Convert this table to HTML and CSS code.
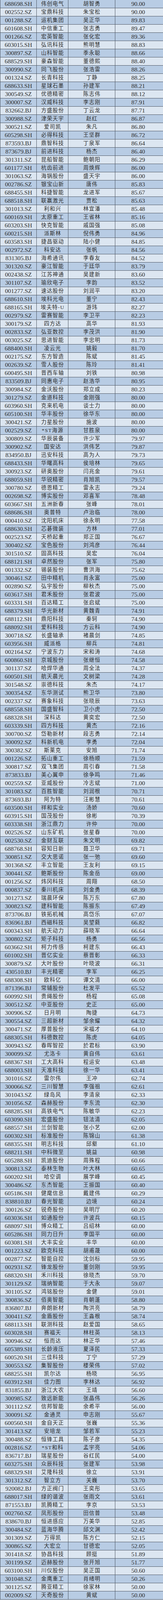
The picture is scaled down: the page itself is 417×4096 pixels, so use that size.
FILE: index.html
```html
<!DOCTYPE html>
<html lang="zh-CN">
<head>
<meta charset="utf-8">
<title>表</title>
<link rel="stylesheet" href="styles.css">
</head>
<body>
<div class="tbl">
<div class="r"><span>688698.SH</span><span class="cn">伟创电气</span><span class="cn">胡智勇</span><span>90.00</span></div>
<div class="r"><span>002552.SZ</span><span class="cn">宝鼎科技</span><span class="cn">朱宝松</span><span>90.00</span></div>
<div class="r"><span>001288.SZ</span><span class="cn">运机集团</span><span class="cn">吴正华</span><span>89.83</span></div>
<div class="r"><span>601608.SH</span><span class="cn">中信重工</span><span class="cn">张志勇</span><span>89.47</span></div>
<div class="r"><span>001266.SZ</span><span class="cn">宏英智能</span><span class="cn">张化宏</span><span>89.36</span></div>
<div class="r"><span>603015.SH</span><span class="cn">弘讯科技</span><span class="cn">熊明慧</span><span>88.83</span></div>
<div class="r"><span>300897.SZ</span><span class="cn">山科智能</span><span class="cn">季永聪</span><span>88.66</span></div>
<div class="r"><span>688529.SH</span><span class="cn">豪森智能</span><span class="cn">董德熙</span><span>88.40</span></div>
<div class="r"><span>300990.SZ</span><span class="cn">同飞股份</span><span class="cn">张浩雷</span><span>88.26</span></div>
<div class="r"><span>001324.SZ</span><span class="cn">长青科技</span><span class="cn">丁静</span><span>88.25</span></div>
<div class="r"><span>688633.SH</span><span class="cn">星球石墨</span><span class="cn">孙建军</span><span>88.21</span></div>
<div class="r"><span>300549.SZ</span><span class="cn">优德精密</span><span class="cn">陈志伟</span><span>88.12</span></div>
<div class="r"><span>300007.SZ</span><span class="cn">汉威科技</span><span class="cn">李志刚</span><span>87.91</span></div>
<div class="r"><span>832662.BJ</span><span class="cn">方盛股份</span><span class="cn">丁云龙</span><span>87.71</span></div>
<div class="r"><span>300988.SZ</span><span class="cn">津荣天宇</span><span class="cn">赵红</span><span>86.87</span></div>
<div class="r"><span>300521.SZ</span><span class="cn">爱司凯</span><span class="cn">朱凡</span><span>86.80</span></div>
<div class="r"><span>605298.SH</span><span class="cn">必得科技</span><span class="cn">王坚群</span><span>86.72</span></div>
<div class="r"><span>873593.BJ</span><span class="cn">鼎智科技</span><span class="cn">丁泉军</span><span>86.64</span></div>
<div class="r"><span>873679.BJ</span><span class="cn">前进科技</span><span class="cn">杨杰</span><span>86.40</span></div>
<div class="r"><span>301311.SZ</span><span class="cn">昆船智能</span><span class="cn">鲍朝阳</span><span>86.29</span></div>
<div class="r"><span>601177.SH</span><span class="cn">杭齿前进</span><span class="cn">周焕辉</span><span>86.00</span></div>
<div class="r"><span>301063.SZ</span><span class="cn">海锅股份</span><span class="cn">盛天宇</span><span>86.00</span></div>
<div class="r"><span>002786.SZ</span><span class="cn">银宝山新</span><span class="cn">唐伟</span><span>85.83</span></div>
<div class="r"><span>688455.SH</span><span class="cn">科捷智能</span><span class="cn">龙进军</span><span>85.67</span></div>
<div class="r"><span>688518.SH</span><span class="cn">联赢激光</span><span class="cn">贾松</span><span>85.63</span></div>
<div class="r"><span>301013.SZ</span><span class="cn">利和兴</span><span class="cn">林宜潘</span><span>85.48</span></div>
<div class="r"><span>600169.SH</span><span class="cn">太原重工</span><span class="cn">王省林</span><span>85.16</span></div>
<div class="r"><span>603203.SH</span><span class="cn">快克智能</span><span class="cn">戚国强</span><span>85.08</span></div>
<div class="r"><span>600215.SH</span><span class="cn">派斯林</span><span class="cn">倪伟勇</span><span>84.96</span></div>
<div class="r"><span>603583.SH</span><span class="cn">捷昌驱动</span><span class="cn">陆小健</span><span>84.85</span></div>
<div class="r"><span>002972.SZ</span><span class="cn">科安达</span><span class="cn">张帆</span><span>84.56</span></div>
<div class="r"><span>831305.BJ</span><span class="cn">海希通讯</span><span class="cn">李春友</span><span>84.52</span></div>
<div class="r"><span>301320.SZ</span><span class="cn">豪江智能</span><span class="cn">于廷华</span><span>83.79</span></div>
<div class="r"><span>002438.SZ</span><span class="cn">江苏神通</span><span class="cn">吴建新</span><span>83.60</span></div>
<div class="r"><span>301107.SZ</span><span class="cn">瑜欣电子</span><span class="cn">李韵</span><span>83.52</span></div>
<div class="r"><span>001277.SZ</span><span class="cn">速达股份</span><span class="cn">刘润平</span><span>83.20</span></div>
<div class="r"><span>688610.SH</span><span class="cn">埃科光电</span><span class="cn">董宁</span><span>82.43</span></div>
<div class="r"><span>688165.SH</span><span class="cn">埃夫特-U</span><span class="cn">游玮</span><span>82.27</span></div>
<div class="r"><span>002979.SZ</span><span class="cn">雷赛智能</span><span class="cn">李卫平</span><span>82.23</span></div>
<div class="r"><span>300179.SZ</span><span class="cn">四方达</span><span class="cn">高华</span><span>81.93</span></div>
<div class="r"><span>002833.SZ</span><span class="cn">弘亚数控</span><span class="cn">李茂洪</span><span>81.90</span></div>
<div class="r"><span>003025.SZ</span><span class="cn">思进智能</span><span class="cn">李忠明</span><span>81.73</span></div>
<div class="r"><span>688400.SH</span><span class="cn">凌云光</span><span class="cn">姚毅</span><span>81.70</span></div>
<div class="r"><span>002175.SZ</span><span class="cn">东方智造</span><span class="cn">陈斌</span><span>81.45</span></div>
<div class="r"><span>002639.SZ</span><span class="cn">雪人股份</span><span class="cn">陈玲</span><span>81.41</span></div>
<div class="r"><span>600495.SH</span><span class="cn">晋西车轴</span><span class="cn">刘铁</span><span>80.98</span></div>
<div class="r"><span>833509.BJ</span><span class="cn">同惠电子</span><span class="cn">赵浩华</span><span>80.95</span></div>
<div class="r"><span>300984.SZ</span><span class="cn">金沃股份</span><span class="cn">郑立成</span><span>80.23</span></div>
<div class="r"><span>301279.SZ</span><span class="cn">金道科技</span><span class="cn">金刚强</span><span>80.00</span></div>
<div class="r"><span>603960.SH</span><span class="cn">克来机电</span><span class="cn">谈士力</span><span>80.00</span></div>
<div class="r"><span>605100.SH</span><span class="cn">华丰股份</span><span class="cn">徐华东</span><span>80.00</span></div>
<div class="r"><span>300421.SZ</span><span class="cn">力星股份</span><span class="cn">施波</span><span>80.00</span></div>
<div class="r"><span>002529.SZ</span><span class="cn">*ST海源</span><span class="cn">甘胜泉</span><span>80.00</span></div>
<div class="r"><span>300809.SZ</span><span class="cn">华辰装备</span><span class="cn">许少军</span><span>79.97</span></div>
<div class="r"><span>300902.SZ</span><span class="cn">国安达</span><span class="cn">洪伟艺</span><span>79.87</span></div>
<div class="r"><span>834950.BJ</span><span class="cn">迅安科技</span><span class="cn">高为人</span><span>79.73</span></div>
<div class="r"><span>688433.SH</span><span class="cn">华曙高科</span><span class="cn">侯培林</span><span>79.65</span></div>
<div class="r"><span>300923.SZ</span><span class="cn">研奥股份</span><span class="cn">闫兆金</span><span>79.61</span></div>
<div class="r"><span>688059.SH</span><span class="cn">华锐精密</span><span class="cn">肖旭凯</span><span>79.57</span></div>
<div class="r"><span>300780.SZ</span><span class="cn">德恩精工</span><span class="cn">雷永志</span><span>79.24</span></div>
<div class="r"><span>002698.SZ</span><span class="cn">博实股份</span><span class="cn">邓喜军</span><span>78.48</span></div>
<div class="r"><span>603667.SH</span><span class="cn">五洲新春</span><span class="cn">张峰</span><span>78.01</span></div>
<div class="r"><span>688686.SH</span><span class="cn">奥普特</span><span class="cn">卢治临</span><span>78.00</span></div>
<div class="r"><span>000410.SZ</span><span class="cn">沈阳机床</span><span class="cn">徐永明</span><span>77.58</span></div>
<div class="r"><span>688630.SH</span><span class="cn">芯碁微装</span><span class="cn">方林</span><span>77.01</span></div>
<div class="r"><span>002523.SZ</span><span class="cn">天桥起重</span><span class="cn">郑正国</span><span>76.67</span></div>
<div class="r"><span>300402.SZ</span><span class="cn">宝色股份</span><span class="cn">刘鸿彦</span><span>76.44</span></div>
<div class="r"><span>301510.SZ</span><span class="cn">固高科技</span><span class="cn">吴宏</span><span>76.04</span></div>
<div class="r"><span>688121.SH</span><span class="cn">卓然股份</span><span class="cn">张军</span><span>75.80</span></div>
<div class="r"><span>001332.SZ</span><span class="cn">锡装股份</span><span class="cn">曹洪海</span><span>75.62</span></div>
<div class="r"><span>300461.SZ</span><span class="cn">田中精机</span><span class="cn">肖永富</span><span>75.00</span></div>
<div class="r"><span>002890.SZ</span><span class="cn">弘宇股份</span><span class="cn">柳秋杰</span><span>75.00</span></div>
<div class="r"><span>603617.SH</span><span class="cn">君禾股份</span><span class="cn">张君波</span><span>75.00</span></div>
<div class="r"><span>603331.SH</span><span class="cn">百达精工</span><span class="cn">张启斌</span><span>75.00</span></div>
<div class="r"><span>688379.SH</span><span class="cn">华光新材</span><span class="cn">黄魏青</span><span>74.91</span></div>
<div class="r"><span>688112.SH</span><span class="cn">鼎阳科技</span><span class="cn">秦轲</span><span>74.90</span></div>
<div class="r"><span>688092.SH</span><span class="cn">爱科科技</span><span class="cn">方云科</span><span>74.90</span></div>
<div class="r"><span>300718.SZ</span><span class="cn">长盛轴承</span><span class="cn">褚晨剑</span><span>74.85</span></div>
<div class="r"><span>603956.SH</span><span class="cn">威派格</span><span class="cn">柳兵</span><span>74.81</span></div>
<div class="r"><span>002164.SZ</span><span class="cn">宁波东力</span><span class="cn">宋和涛</span><span>74.68</span></div>
<div class="r"><span>600860.SH</span><span class="cn">京城股份</span><span class="cn">张继恒</span><span>74.58</span></div>
<div class="r"><span>301137.SZ</span><span class="cn">哈焊华通</span><span class="cn">周全法</span><span>74.37</span></div>
<div class="r"><span>600501.SH</span><span class="cn">航天晨光</span><span class="cn">文树梁</span><span>74.28</span></div>
<div class="r"><span>301548.SZ</span><span class="cn">崇德科技</span><span class="cn">朱杰</span><span>74.17</span></div>
<div class="r"><span>300354.SZ</span><span class="cn">东华测试</span><span class="cn">熊卫华</span><span>73.80</span></div>
<div class="r"><span>002337.SZ</span><span class="cn">赛象科技</span><span class="cn">张晓辰</span><span>73.63</span></div>
<div class="r"><span>688558.SH</span><span class="cn">国盛智科</span><span class="cn">卫小虎</span><span>72.50</span></div>
<div class="r"><span>688328.SH</span><span class="cn">深科达</span><span class="cn">黄奕宏</span><span>72.50</span></div>
<div class="r"><span>603339.SH</span><span class="cn">四方科技</span><span class="cn">黄杰</span><span>72.16</span></div>
<div class="r"><span>300700.SZ</span><span class="cn">岱勒新材</span><span class="cn">段志勇</span><span>72.14</span></div>
<div class="r"><span>300092.SZ</span><span class="cn">科新机电</span><span class="cn">李勇</span><span>72.04</span></div>
<div class="r"><span>300382.SZ</span><span class="cn">斯莱克</span><span class="cn">安旭</span><span>71.74</span></div>
<div class="r"><span>001226.SZ</span><span class="cn">拓山重工</span><span class="cn">徐杨顺</span><span>71.59</span></div>
<div class="r"><span>300817.SZ</span><span class="cn">双飞集团</span><span class="cn">周引春</span><span>71.58</span></div>
<div class="r"><span>873833.BJ</span><span class="cn">美心翼申</span><span class="cn">徐争鸣</span><span>71.46</span></div>
<div class="r"><span>002559.SZ</span><span class="cn">亚威股份</span><span class="cn">冷志斌</span><span>71.00</span></div>
<div class="r"><span>301083.SZ</span><span class="cn">百胜智能</span><span class="cn">刘润根</span><span>70.71</span></div>
<div class="r"><span>873693.BJ</span><span class="cn">阿为特</span><span class="cn">汪彬慧</span><span>70.61</span></div>
<div class="r"><span>603500.SH</span><span class="cn">祥和实业</span><span class="cn">汤娇</span><span>70.60</span></div>
<div class="r"><span>603915.SH</span><span class="cn">国茂股份</span><span class="cn">徐彬</span><span>70.39</span></div>
<div class="r"><span>603338.SH</span><span class="cn">浙江鼎力</span><span class="cn">许仲</span><span>70.00</span></div>
<div class="r"><span>002526.SZ</span><span class="cn">山东矿机</span><span class="cn">张星春</span><span>70.00</span></div>
<div class="r"><span>002530.SZ</span><span class="cn">金财互联</span><span class="cn">朱文明</span><span>69.82</span></div>
<div class="r"><span>688768.SH</span><span class="cn">容知日新</span><span class="cn">聂卫华</span><span>69.71</span></div>
<div class="r"><span>300851.SZ</span><span class="cn">交大思诺</span><span class="cn">张一弛</span><span>69.60</span></div>
<div class="r"><span>301368.SZ</span><span class="cn">丰立智能</span><span class="cn">王友利</span><span>69.15</span></div>
<div class="r"><span>300441.SZ</span><span class="cn">鲍斯股份</span><span class="cn">陈金岳</span><span>69.00</span></div>
<div class="r"><span>001256.SZ</span><span class="cn">炜冈科技</span><span class="cn">周翔</span><span>68.50</span></div>
<div class="r"><span>000837.SZ</span><span class="cn">秦川机床</span><span class="cn">刘金勇</span><span>68.39</span></div>
<div class="r"><span>301273.SZ</span><span class="cn">瑞晨环保</span><span class="cn">陈万东</span><span>67.80</span></div>
<div class="r"><span>300823.SZ</span><span class="cn">建科智能</span><span class="cn">陈振东</span><span>67.49</span></div>
<div class="r"><span>873706.BJ</span><span class="cn">铁拓机械</span><span class="cn">高岱乐</span><span>67.07</span></div>
<div class="r"><span>836961.BJ</span><span class="cn">西磁科技</span><span class="cn">吴望蕤</span><span>66.82</span></div>
<div class="r"><span>600343.SH</span><span class="cn">航天动力</span><span class="cn">薛晓军</span><span>66.64</span></div>
<div class="r"><span>300802.SZ</span><span class="cn">矩子科技</span><span class="cn">杨勇</span><span>66.56</span></div>
<div class="r"><span>603662.SH</span><span class="cn">柯力传感</span><span class="cn">柯建东</span><span>66.43</span></div>
<div class="r"><span>601002.SH</span><span class="cn">晋亿实业</span><span class="cn">蔡晋彰</span><span>66.33</span></div>
<div class="r"><span>300879.SZ</span><span class="cn">大叶股份</span><span class="cn">叶晓波</span><span>66.31</span></div>
<div class="r"><span>430510.BJ</span><span class="cn">丰光精密</span><span class="cn">李军</span><span>66.25</span></div>
<div class="r"><span>688308.SH</span><span class="cn">欧科亿</span><span class="cn">谭文清</span><span>66.00</span></div>
<div class="r"><span>871396.BJ</span><span class="cn">常辅股份</span><span class="cn">杜发平</span><span>65.52</span></div>
<div class="r"><span>600992.SH</span><span class="cn">贵绳股份</span><span class="cn">杨程</span><span>65.08</span></div>
<div class="r"><span>300512.SZ</span><span class="cn">中亚股份</span><span class="cn">史正</span><span>65.00</span></div>
<div class="r"><span>300906.SZ</span><span class="cn">日月明</span><span class="cn">陶捷</span><span>64.73</span></div>
<div class="r"><span>300554.SZ</span><span class="cn">三超新材</span><span class="cn">邹余耀</span><span>64.32</span></div>
<div class="r"><span>300471.SZ</span><span class="cn">厚普股份</span><span class="cn">宋福才</span><span>64.10</span></div>
<div class="r"><span>688305.SH</span><span class="cn">科德数控</span><span class="cn">陈虎</span><span>64.05</span></div>
<div class="r"><span>300943.SZ</span><span class="cn">春晖智控</span><span class="cn">於君标</span><span>63.90</span></div>
<div class="r"><span>300099.SZ</span><span class="cn">尤洛卡</span><span class="cn">黄自伟</span><span>63.61</span></div>
<div class="r"><span>688367.SH</span><span class="cn">工大高科</span><span class="cn">程运安</span><span>63.48</span></div>
<div class="r"><span>688003.SH</span><span class="cn">天准科技</span><span class="cn">徐一华</span><span>63.41</span></div>
<div class="r"><span>301016.SZ</span><span class="cn">雷尔伟</span><span class="cn">王冲</span><span>62.74</span></div>
<div class="r"><span>300066.SZ</span><span class="cn">三川智慧</span><span class="cn">李强祖</span><span>62.61</span></div>
<div class="r"><span>301043.SZ</span><span class="cn">绿岛风</span><span class="cn">李清泉</span><span>62.33</span></div>
<div class="r"><span>301056.SZ</span><span class="cn">森赫股份</span><span class="cn">李东流</span><span>62.30</span></div>
<div class="r"><span>688285.SH</span><span class="cn">高铁电气</span><span class="cn">陈敏华</span><span>62.23</span></div>
<div class="r"><span>603090.SH</span><span class="cn">宏盛股份</span><span class="cn">钮法清</span><span>62.05</span></div>
<div class="r"><span>688557.SH</span><span class="cn">兰剑智能</span><span class="cn">张小艺</span><span>62.00</span></div>
<div class="r"><span>600302.SH</span><span class="cn">标准股份</span><span class="cn">陈锦山</span><span>61.38</span></div>
<div class="r"><span>688355.SH</span><span class="cn">明志科技</span><span class="cn">邱壑</span><span>61.10</span></div>
<div class="r"><span>688211.SH</span><span class="cn">中科微至</span><span class="cn">姚益</span><span>60.98</span></div>
<div class="r"><span>605288.SH</span><span class="cn">凯迪股份</span><span class="cn">周殊程</span><span>60.66</span></div>
<div class="r"><span>300813.SZ</span><span class="cn">泰林生物</span><span class="cn">叶大林</span><span>60.65</span></div>
<div class="r"><span>600202.SH</span><span class="cn">哈空调</span><span class="cn">展学峰</span><span>60.45</span></div>
<div class="r"><span>300486.SZ</span><span class="cn">东杰智能</span><span class="cn">王振国</span><span>60.40</span></div>
<div class="r"><span>605186.SH</span><span class="cn">健麾信息</span><span class="cn">戴建伟</span><span>60.29</span></div>
<div class="r"><span>838810.BJ</span><span class="cn">春光智能</span><span class="cn">边境</span><span>60.24</span></div>
<div class="r"><span>300126.SZ</span><span class="cn">锐奇股份</span><span class="cn">吴明厅</span><span>60.20</span></div>
<div class="r"><span>603036.SH</span><span class="cn">如通股份</span><span class="cn">许波兵</span><span>60.15</span></div>
<div class="r"><span>688097.SH</span><span class="cn">博众精工</span><span class="cn">吕绍林</span><span>60.00</span></div>
<div class="r"><span>605286.SH</span><span class="cn">同力日升</span><span class="cn">李国平</span><span>60.00</span></div>
<div class="r"><span>603081.SH</span><span class="cn">大丰实业</span><span class="cn">丰华</span><span>60.00</span></div>
<div class="r"><span>001223.SZ</span><span class="cn">欧克科技</span><span class="cn">胡甫晟</span><span>60.00</span></div>
<div class="r"><span>002877.SZ</span><span class="cn">智能自控</span><span class="cn">沈剑标</span><span>59.95</span></div>
<div class="r"><span>002931.SZ</span><span class="cn">锋龙股份</span><span class="cn">董剑刚</span><span>59.95</span></div>
<div class="r"><span>688320.SH</span><span class="cn">禾川科技</span><span class="cn">徐晓杰</span><span>59.70</span></div>
<div class="r"><span>301129.SZ</span><span class="cn">瑞纳智能</span><span class="cn">于大永</span><span>59.07</span></div>
<div class="r"><span>301105.SZ</span><span class="cn">鸿铭股份</span><span class="cn">金健</span><span>59.01</span></div>
<div class="r"><span>300836.SZ</span><span class="cn">佰奥智能</span><span class="cn">肖朝蓬</span><span>58.80</span></div>
<div class="r"><span>836807.BJ</span><span class="cn">奔朗新材</span><span class="cn">陶洪亮</span><span>58.79</span></div>
<div class="r"><span>300411.SZ</span><span class="cn">金盾股份</span><span class="cn">王淼根</span><span>58.74</span></div>
<div class="r"><span>688113.SH</span><span class="cn">联测科技</span><span class="cn">赵爱国</span><span>58.65</span></div>
<div class="r"><span>603028.SH</span><span class="cn">赛福天</span><span class="cn">林柱英</span><span>58.13</span></div>
<div class="r"><span>300946.SZ</span><span class="cn">恒而达</span><span class="cn">林正华</span><span>57.46</span></div>
<div class="r"><span>605389.SH</span><span class="cn">长龄液压</span><span class="cn">夏泽民</span><span>57.33</span></div>
<div class="r"><span>600520.SH</span><span class="cn">三佳科技</span><span class="cn">丁宁</span><span>57.29</span></div>
<div class="r"><span>300553.SZ</span><span class="cn">集智股份</span><span class="cn">楼荣伟</span><span>57.02</span></div>
<div class="r"><span>688255.SH</span><span class="cn">凯尔达</span><span class="cn">杨晓</span><span>56.95</span></div>
<div class="r"><span>603912.SH</span><span class="cn">佳力图</span><span class="cn">李林达</span><span>56.92</span></div>
<div class="r"><span>831855.BJ</span><span class="cn">浙江大农</span><span class="cn">王靖</span><span>56.60</span></div>
<div class="r"><span>300985.SZ</span><span class="cn">致远新能</span><span class="cn">张晶伟</span><span>56.26</span></div>
<div class="r"><span>301112.SZ</span><span class="cn">信邦智能</span><span class="cn">余希平</span><span>56.00</span></div>
<div class="r"><span>300091.SZ</span><span class="cn">金通灵</span><span class="cn">申志刚</span><span>55.67</span></div>
<div class="r"><span>600560.SH</span><span class="cn">金自天正</span><span class="cn">张巍</span><span>55.36</span></div>
<div class="r"><span>301413.SZ</span><span class="cn">安培龙</span><span class="cn">邹若军</span><span>55.23</span></div>
<div class="r"><span>300488.SZ</span><span class="cn">恒锋工具</span><span class="cn">陈子彦</span><span>54.35</span></div>
<div class="r"><span>002816.SZ</span><span class="cn">*ST和科</span><span class="cn">孟宇亮</span><span>54.06</span></div>
<div class="r"><span>836717.BJ</span><span class="cn">瑞星股份</span><span class="cn">谷红民</span><span>54.00</span></div>
<div class="r"><span>603275.SH</span><span class="cn">众辰科技</span><span class="cn">张建军</span><span>53.98</span></div>
<div class="r"><span>688329.SH</span><span class="cn">艾隆科技</span><span class="cn">徐立</span><span>53.91</span></div>
<div class="r"><span>301312.SZ</span><span class="cn">智立方</span><span class="cn">关巍</span><span>53.70</span></div>
<div class="r"><span>920082.BJ</span><span class="cn">方正阀门</span><span class="cn">王奕彤</span><span>53.65</span></div>
<div class="r"><span>688017.SH</span><span class="cn">绿的谐波</span><span class="cn">张雨文</span><span>53.61</span></div>
<div class="r"><span>871553.BJ</span><span class="cn">凯腾精工</span><span class="cn">李京</span><span>53.53</span></div>
<div class="r"><span>002760.SZ</span><span class="cn">凤形股份</span><span class="cn">田信普</span><span>53.48</span></div>
<div class="r"><span>838670.BJ</span><span class="cn">恒进感应</span><span class="cn">万美华</span><span>52.85</span></div>
<div class="r"><span>300484.SZ</span><span class="cn">蓝海华腾</span><span class="cn">邱文渊</span><span>52.42</span></div>
<div class="r"><span>301309.SZ</span><span class="cn">万得凯</span><span class="cn">陈方仁</span><span>52.15</span></div>
<div class="r"><span>300865.SZ</span><span class="cn">大宏立</span><span class="cn">甘德宏</span><span>52.05</span></div>
<div class="r"><span>301418.SZ</span><span class="cn">协昌科技</span><span class="cn">顾挺</span><span>51.89</span></div>
<div class="r"><span>301199.SZ</span><span class="cn">迈赫股份</span><span class="cn">张开旭</span><span>51.77</span></div>
<div class="r"><span>603100.SH</span><span class="cn">川仪股份</span><span class="cn">吴正国</span><span>50.60</span></div>
<div class="r"><span>301048.SZ</span><span class="cn">金鹰重工</span><span class="cn">肖绪明</span><span>50.26</span></div>
<div class="r"><span>301125.SZ</span><span class="cn">腾亚精工</span><span class="cn">徐家林</span><span>50.00</span></div>
<div class="r"><span>002009.SZ</span><span class="cn">天奇股份</span><span class="cn">黄斌</span><span>50.00</span></div>
</div>
</body>
</html>
```
FILE: styles.css
```css
html, body {
  margin: 0;
  padding: 0;
  background: #dce6f1;
}

.tbl {
  width: 417px;
  border-left: 1px solid #4d5663;
  box-sizing: border-box;
}

.r {
  display: grid;
  grid-template-columns: 93px 81px 120px 1fr;
  height: 21px;
  box-sizing: border-box;
  border-bottom: 1px solid #4d5663;
  background: #dce6f1;
  color: #2e2e2e;
  font-family: "Liberation Serif", "Noto Sans CJK SC", serif;
  font-size: 15.5px;
}

.r:nth-child(odd) {
  background: #b8cce4;
}

.r > span {
  display: flex;
  align-items: center;
  justify-content: center;
  line-height: 20px;
  white-space: nowrap;
  overflow: hidden;
  border-right: 1px solid #4d5663;
}

.r > span:last-child {
  border-right: none;
  padding-right: 5px;
}

.r > span.cn {
  font-size: 13.5px;
  letter-spacing: 1.2px;
  text-indent: 1.2px;
}
```
